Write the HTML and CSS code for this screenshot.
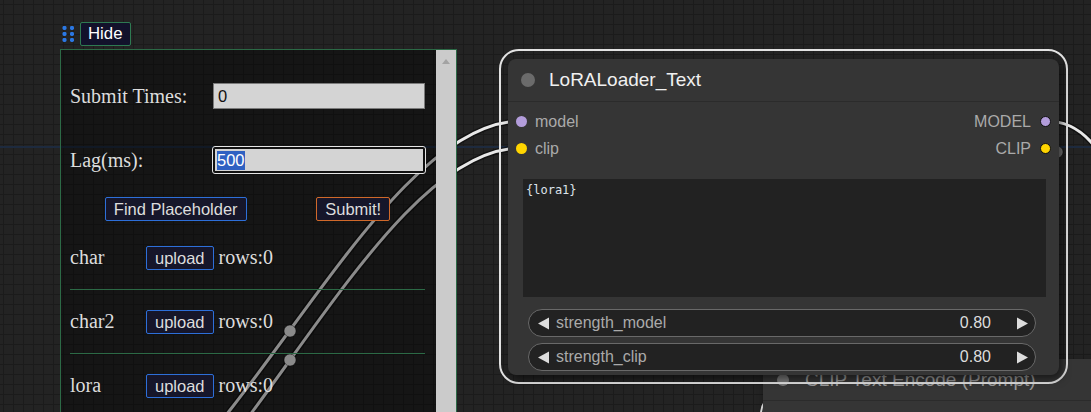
FILE: index.html
```html
<!DOCTYPE html>
<html>
<head>
<meta charset="utf-8">
<link rel="stylesheet" href="styles.css">
</head>
<body>
<div class="canvas">
  <div class="hline"></div>

  <svg class="links" width="1091" height="412" viewBox="0 0 1091 412">
    <g fill="none" stroke-linecap="round">
      <path class="link-border" d="M59,539 C215,539 365,121 521,121"/>
      <path class="link-border" d="M59,572 C216,572 364,148 521,148"/>
      <path class="link-border" d="M1045,121 C1085,121 1100,150 1130,205"/>
      <path class="link" d="M59,539 C215,539 365,121 521,121"/>
      <path class="link" d="M59,572 C216,572 364,148 521,148"/>
      <path class="link" d="M1045,121 C1085,121 1100,150 1130,205"/>
      <path class="link thin" d="M766,400 Q761,406 761,414"/>
    </g>
    <circle class="link-mid" cx="290" cy="331" r="6"/>
    <circle class="link-mid" cx="290" cy="360" r="6"/>
    <circle class="link-mid dim" cx="1057" cy="152" r="6"/>
  </svg>

  <div class="node node-clip">
    <div class="node-title">
      <span class="title-dot"></span>
      <span class="title-text">CLIP Text Encode (Prompt)</span>
    </div>
  </div>

  <div class="node-selection"></div>

  <div class="node node-lora">
    <div class="node-title">
      <span class="title-dot"></span>
      <span class="title-text">LoRALoader_Text</span>
    </div>
    <div class="slots">
      <div class="slot-row">
        <span class="slot-in"><i class="dot dot-model"></i>model</span>
        <span class="slot-out">MODEL<i class="dot dot-model dot-out"></i></span>
      </div>
      <div class="slot-row">
        <span class="slot-in"><i class="dot dot-clip"></i>clip</span>
        <span class="slot-out">CLIP<i class="dot dot-clip dot-out"></i></span>
      </div>
    </div>
    <div class="prompt">{lora1}</div>
    <div class="widgets">
      <div class="num-widget">
        <svg class="arrow" width="13" height="13" viewBox="0 0 13 13"><polygon points="12,0.5 12,12.5 1,6.5"/></svg>
        <span class="w-label">strength_model</span>
        <span class="w-value">0.80</span>
        <svg class="arrow arrow-r" width="13" height="13" viewBox="0 0 13 13"><polygon points="1,0.5 1,12.5 12,6.5"/></svg>
      </div>
      <div class="num-widget">
        <svg class="arrow" width="13" height="13" viewBox="0 0 13 13"><polygon points="12,0.5 12,12.5 1,6.5"/></svg>
        <span class="w-label">strength_clip</span>
        <span class="w-value">0.80</span>
        <svg class="arrow arrow-r" width="13" height="13" viewBox="0 0 13 13"><polygon points="1,0.5 1,12.5 12,6.5"/></svg>
      </div>
    </div>
  </div>

  <div class="hide-bar">
    <svg class="grip" width="12" height="17" viewBox="0 0 12 17">
      <rect x="0.5" y="2" width="4" height="4" rx="1.4"/>
      <rect x="8" y="2" width="4" height="4" rx="1.4"/>
      <rect x="0.5" y="8" width="4" height="4" rx="1.4"/>
      <rect x="8" y="8" width="4" height="4" rx="1.4"/>
      <rect x="0.5" y="14" width="4" height="4" rx="1.4"/>
      <rect x="8" y="14" width="4" height="4" rx="1.4"/>
    </svg>
    <button class="hide-btn">Hide</button>
  </div>

  <div class="panel">
    <div class="panel-content">
      <div class="form-row">
        <span class="form-label">Submit Times:</span>
        <div class="text-input">0</div>
      </div>
      <div class="form-row">
        <span class="form-label">Lag(ms):</span>
        <div class="text-input focused"><span class="selected">500</span></div>
      </div>
      <div class="btn-row">
        <button class="btn">Find Placeholder</button>
        <button class="btn btn-submit">Submit!</button>
      </div>
      <div class="file-row">
        <span class="file-label">char</span>
        <button class="btn">upload</button>
        <span class="rows">rows:0</span>
      </div>
      <div class="file-row">
        <span class="file-label">char2</span>
        <button class="btn">upload</button>
        <span class="rows">rows:0</span>
      </div>
      <div class="file-row">
        <span class="file-label">lora</span>
        <button class="btn">upload</button>
        <span class="rows">rows:0</span>
      </div>
    </div>
    <div class="scrollbar"><span class="scroll-up"></span></div>
  </div>
</div>
</body>
</html>
```

FILE: styles.css
```css
html, body {
  margin: 0;
  padding: 0;
  background: #222;
}

body {
  width: 1091px;
  height: 412px;
  overflow: hidden;
  font-family: "Liberation Sans", Arial, sans-serif;
}

.canvas {
  position: relative;
  width: 1091px;
  height: 412px;
  overflow: hidden;
  background-color: #232323;
  background-image:
    linear-gradient(#1b1b1b 1px, transparent 1px),
    linear-gradient(90deg, #1b1b1b 1px, transparent 1px);
  background-size: 10px 10px;
  background-position: 3px 4px;
}

.hline {
  position: absolute;
  left: 0;
  top: 146px;
  width: 1091px;
  height: 2px;
  background: #1d2a3e;
}

.links {
  position: absolute;
  left: 0;
  top: 0;
}

.link-border {
  stroke: rgba(0, 0, 0, 0.45);
  stroke-width: 6;
}

.link {
  stroke: #e8e8e8;
  stroke-width: 3;
}

.link.thin {
  stroke-width: 2;
}

.link-mid {
  fill: #e6e6e6;
  stroke: rgba(0, 0, 0, 0.4);
  stroke-width: 1;
}

.link-mid.dim {
  fill: #777;
}

/* ---------- nodes ---------- */
.node {
  position: absolute;
  background: #353535;
  border-radius: 8px;
  box-shadow: 3px 4px 8px rgba(0, 0, 0, 0.55);
  display: flex;
  flex-direction: column;
}

.node-title {
  height: 42px;
  flex: none;
  display: flex;
  align-items: center;
  border-bottom: 1px solid #2b2b2b;
  padding-left: 13px;
}

.title-dot {
  width: 14px;
  height: 14px;
  border-radius: 50%;
  background: #6b6b6b;
  flex: none;
}

.title-text {
  margin-left: 14px;
  font-size: 19px;
  color: #f0f0f0;
  white-space: nowrap;
}

.node-clip {
  left: 763px;
  top: 359px;
  width: 380px;
  height: 90px;
}

.node-clip .node-title {
  height: 41px;
  padding-left: 14px;
}

.node-clip .title-dot {
  width: 12px;
  height: 12px;
  background: #7a7a7a;
}

.node-clip .title-text {
  margin-left: 16px;
  color: #999;
}

.node-selection {
  position: absolute;
  left: 499px;
  top: 49px;
  width: 569px;
  height: 335px;
  box-sizing: border-box;
  border: 2px solid #e2e2e2;
  border-radius: 20px;
}

.node-lora {
  left: 508px;
  top: 59px;
  width: 551px;
  height: 316px;
}

.slots {
  padding: 6px 8px 0 8px;
}

.slot-row {
  height: 27px;
  display: flex;
  align-items: center;
  justify-content: space-between;
  font-size: 16px;
  color: #aaa;
}

.slot-in,
.slot-out {
  display: flex;
  align-items: center;
}

.dot {
  display: block;
  width: 11px;
  height: 11px;
  border-radius: 50%;
  box-sizing: border-box;
}

.slot-in .dot {
  margin-right: 8px;
}

.dot-out {
  margin-left: 9px;
  border: 1px solid #111;
}

.dot-model {
  background: #b39ddb;
}

.dot-clip {
  background: #ffd500;
}

.prompt {
  margin: 17px 13px 0 15px;
  height: 118px;
  background: #222;
  box-sizing: border-box;
  padding: 4px 3px;
  font-family: "DejaVu Sans Mono", monospace;
  font-size: 12px;
  line-height: 15px;
  color: #dde3ea;
}

.widgets {
  margin: 12px 23px 0 20px;
  display: flex;
  flex-direction: column;
  gap: 6px;
}

.num-widget {
  height: 28px;
  box-sizing: border-box;
  border: 1px solid #696969;
  border-radius: 14px;
  background: #222;
  display: flex;
  align-items: center;
  padding: 0 6px 0 8px;
  font-size: 16px;
}

.arrow {
  fill: #ddd;
  flex: none;
}

.w-label {
  margin-left: 6px;
  color: #aaa;
}

.w-value {
  margin-left: auto;
  color: #ddd;
}

.arrow-r {
  margin-left: 25px;
}

/* ---------- hide bar ---------- */
.hide-bar {
  position: absolute;
  left: 62px;
  top: 22px;
  display: flex;
  align-items: center;
}

.grip {
  fill: #2b78e4;
  overflow: visible;
  margin-top: -3px;
}

.hide-btn {
  margin-left: 6px;
  height: 24px;
  box-sizing: border-box;
  padding: 0 7px;
  background: #12122b;
  border: 1px solid #2e7a52;
  border-radius: 2px;
  color: #fff;
  font-family: "Liberation Sans", Arial, sans-serif;
  font-size: 16.8px;
  line-height: 20px;
}

/* ---------- panel ---------- */
.panel {
  position: absolute;
  left: 60px;
  top: 49px;
  width: 397px;
  height: 400px;
  box-sizing: border-box;
  border: 1px solid #2c6a46;
  background: rgba(0, 0, 0, 0.4);
  display: flex;
}

.panel-content {
  flex: 1;
  padding: 14px 11px 0 9px;
  font-family: "Liberation Serif", "Times New Roman", serif;
  font-size: 20px;
  color: #ddd;
}

.scrollbar {
  width: 20px;
  flex: none;
  background: #cbcbcb;
  position: relative;
}

.scroll-up {
  position: absolute;
  left: 6px;
  top: 9px;
  width: 0;
  height: 0;
  border-left: 4px solid transparent;
  border-right: 4px solid transparent;
  border-bottom: 5px solid #a3a3a3;
}

.form-row {
  height: 64px;
  display: flex;
  align-items: center;
}

.form-label {
  width: 143px;
  flex: none;
}

.text-input {
  width: 212px;
  height: 26px;
  box-sizing: border-box;
  background: #d4d4d4;
  border: 1px solid #7b7b7b;
  padding: 0 4px;
  display: flex;
  align-items: center;
  font-family: "Liberation Sans", Arial, sans-serif;
  font-size: 16.5px;
  color: #111;
}

.text-input.focused {
  height: 26px;
  border: 2px solid #111;
  border-radius: 2px;
  outline: 1px solid #e4e4e4;
  padding: 0 2px;
}

.selected {
  background: #2f61c2;
  color: #fff;
  line-height: 19px;
}

.btn-row {
  height: 34px;
  display: flex;
  align-items: center;
  justify-content: space-around;
}

.btn {
  height: 24px;
  box-sizing: border-box;
  padding: 0 8px;
  background: #16162a;
  border: 1px solid #2d6fd9;
  border-radius: 2px;
  color: #ddd;
  font-family: "Liberation Sans", Arial, sans-serif;
  font-size: 16.5px;
  line-height: 20px;
}

.btn-submit {
  border-color: #d0692a;
}

.file-row {
  height: 63px;
  display: flex;
  align-items: center;
  border-bottom: 1px solid #2c6a46;
}

.file-label {
  width: 76px;
  flex: none;
}

.rows {
  margin-left: 5px;
}
```
